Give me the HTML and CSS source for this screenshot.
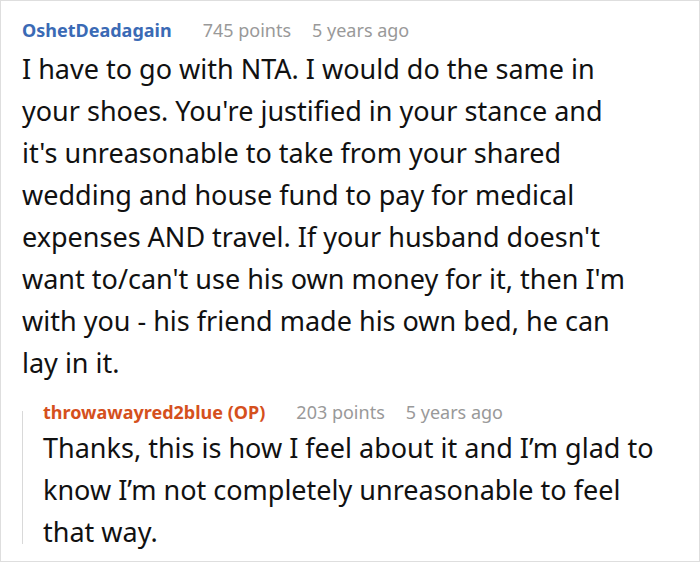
FILE: index.html
```html
<!DOCTYPE html>
<html lang="en">
<head>
<meta charset="utf-8">
<title>Comment</title>
<link rel="stylesheet" href="styles.css">
</head>
<body>
<div class="card">
  <div class="comment">
    <div class="meta">
      <span class="author">OshetDeadagain</span>
      <span class="points">745 points</span>
      <span class="time">5 years ago</span>
    </div>
    <p class="text">I have to go with NTA. I would do the same in<br>your shoes. You're justified in your stance and<br>it's unreasonable to take from your shared<br>wedding and house fund to pay for medical<br>expenses AND travel. If your husband doesn't<br>want to/can't use his own money for it, then I'm<br>with you - his friend made his own bed, he can<br>lay in it.</p>
    <div class="reply">
      <div class="meta">
        <span class="author op">throwawayred2blue (OP)</span>
        <span class="points">203 points</span>
        <span class="time">5 years ago</span>
      </div>
      <p class="text">Thanks, this is how I feel about it and I’m glad to<br>know I’m not completely unreasonable to feel<br>that way.</p>
    </div>
  </div>
</div>
</body>
</html>
```
FILE: styles.css
```css
html, body {
  margin: 0;
  padding: 0;
  background: #fff;
}
.card {
  box-sizing: border-box;
  width: 700px;
  height: 562px;
  border: 1px solid #dedede;
  padding: 17px 10px 0 21px;
  font-family: "Noto Sans", "Open Sans", sans-serif;
  color: #111;
  overflow: hidden;
}
.meta {
  display: flex;
  gap: 21px;
  font-size: 18px;
  line-height: 24px;
  color: #999;
  white-space: nowrap;
}
.author {
  font-weight: 700;
  color: #3a6ab5;
  margin-right: 10px;
}
.author.op {
  color: #d5501d;
}
.text {
  margin: 6px 0 0;
  font-size: 27px;
  line-height: 42px;
  white-space: nowrap;
}
.reply {
  position: relative;
  margin-top: 16px;
  padding-left: 21px;
}
.reply::before {
  content: "";
  position: absolute;
  left: 0;
  top: 11px;
  bottom: 9px;
  width: 1px;
  background: #d9d9d9;
}
.reply .text {
  margin-top: 3px;
}
```
